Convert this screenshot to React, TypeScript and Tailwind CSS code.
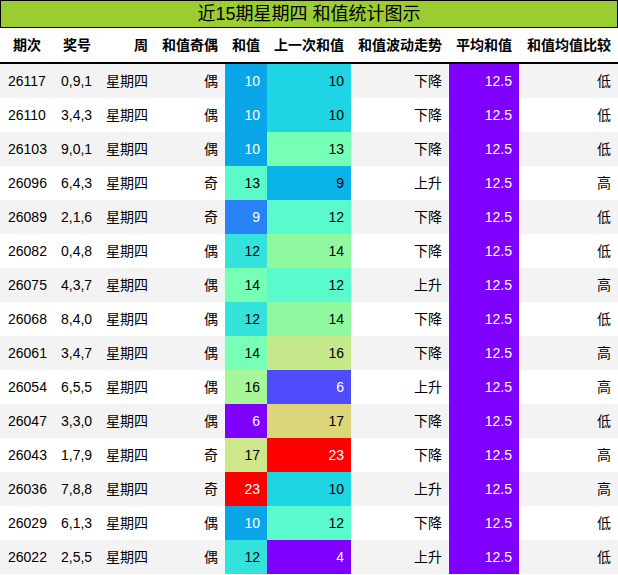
const rows: [string, string, string, number, string, string, string, string, string, string][] = [
  ['26117', '0,9,1', '偶', 10, 'bg-[#0aa5e9] text-white', 10, 'bg-[#1fd4e3] text-black', '下降', '低'] as any,
  ['26110', '3,4,3', '偶', 10, 'bg-[#0aa5e9] text-white', 10, 'bg-[#1fd4e3] text-black', '下降', '低'] as any,
  ['26103', '9,0,1', '偶', 10, 'bg-[#0aa5e9] text-white', 13, 'bg-[#78ffb6] text-black', '下降', '低'] as any,
  ['26096', '6,4,3', '奇', 13, 'bg-[#5cfac8] text-black', 9, 'bg-[#0ab4e8] text-black', '上升', '高'] as any,
  ['26089', '2,1,6', '奇', 9, 'bg-[#2a82f7] text-white', 12, 'bg-[#5afacd] text-black', '下降', '低'] as any,
  ['26082', '0,4,8', '偶', 12, 'bg-[#33e2da] text-black', 14, 'bg-[#90f9a0] text-black', '下降', '低'] as any,
  ['26075', '4,3,7', '偶', 14, 'bg-[#78ffb6] text-black', 12, 'bg-[#5afacd] text-black', '上升', '高'] as any,
  ['26068', '8,4,0', '偶', 12, 'bg-[#33e2da] text-black', 14, 'bg-[#90f9a0] text-black', '下降', '低'] as any,
  ['26061', '3,4,7', '偶', 14, 'bg-[#78ffb6] text-black', 16, 'bg-[#c5e98a] text-black', '下降', '高'] as any,
  ['26054', '6,5,5', '偶', 16, 'bg-[#a8f69a] text-black', 6, 'bg-[#504cfc] text-white', '上升', '高'] as any,
  ['26047', '3,3,0', '偶', 6, 'bg-[#8000ff] text-white', 17, 'bg-[#dcd67b] text-black', '下降', '低'] as any,
  ['26043', '1,7,9', '奇', 17, 'bg-[#cde78a] text-black', 23, 'bg-[#ff0000] text-white', '下降', '高'] as any,
  ['26036', '7,8,8', '奇', 23, 'bg-[#ff0000] text-white', 10, 'bg-[#1fd4e3] text-black', '上升', '高'] as any,
  ['26029', '6,1,3', '偶', 10, 'bg-[#0aa5e9] text-white', 12, 'bg-[#5afacd] text-black', '下降', '低'] as any,
  ['26022', '2,5,5', '偶', 12, 'bg-[#33e2da] text-black', 4, 'bg-[#8000ff] text-white', '上升', '低'] as any,
]

export default function App() {
  return (
    <div className="w-[618px] h-[575px] bg-white text-[14px] text-black overflow-hidden" style={{ fontFamily: "'Liberation Sans', 'Noto Sans CJK SC', sans-serif" }}>
      <div className="h-[28px] bg-[#9acd32] border border-black flex items-center justify-center text-[18px]">
        近15期星期四 和值统计图示
      </div>
      <div className="flex h-[36px] items-center font-bold border-b-2 border-black">
        <div className="w-[54px] text-center">期次</div>
        <div className="w-[46px] text-center">奖号</div>
        <div className="w-[55px] text-right pr-[7px]">周</div>
        <div className="w-[70px] text-right pr-[7px]">和值奇偶</div>
        <div className="w-[42px] text-right pr-[7px]">和值</div>
        <div className="w-[84px] text-right pr-[7px]">上一次和值</div>
        <div className="w-[98px] text-right pr-[7px]">和值波动走势</div>
        <div className="w-[70px] text-right pr-[7px]">平均和值</div>
        <div className="w-[99px] text-right pr-[7px]">和值均值比较</div>
      </div>
      {rows.map((r: any, i) => (
        <div key={r[0]} className={`flex h-[34px] items-center ${i % 2 === 0 ? 'bg-[#f3f3f3]' : 'bg-white'}`}>
          <div className="w-[54px] pl-[8px]">{r[0]}</div>
          <div className="w-[46px] pl-[7px]">{r[1]}</div>
          <div className="w-[55px] pl-[6px]">星期四</div>
          <div className="w-[70px] text-right pr-[7px]">{r[2]}</div>
          <div className={`w-[42px] h-full flex items-center justify-end pr-[7px] ${r[4]}`}>{r[3]}</div>
          <div className={`w-[84px] h-full flex items-center justify-end pr-[7px] ${r[6]}`}>{r[5]}</div>
          <div className="w-[98px] text-right pr-[7px]">{r[7]}</div>
          <div className="w-[70px] h-full flex items-center justify-end pr-[7px] bg-[#8000ff] text-white">12.5</div>
          <div className="w-[99px] text-right pr-[7px]">{r[8]}</div>
        </div>
      ))}
    </div>
  )
}
